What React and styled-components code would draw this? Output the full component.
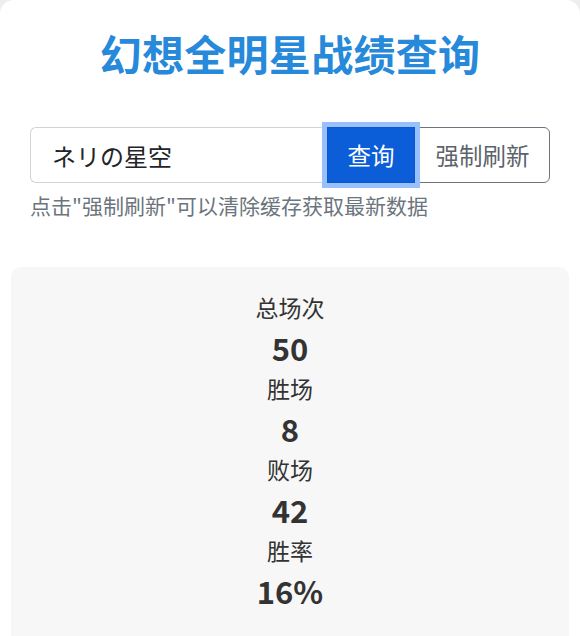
import React, { useState } from 'react';
import styled, { createGlobalStyle } from 'styled-components';

const GlobalStyle = createGlobalStyle`
    body {
        margin: 0;
        background: #eeeeee;
        font-family: "Noto Sans CJK SC", "Noto Sans", sans-serif;
    }
`;

const Card = styled.div`
    background: #ffffff;
    border-radius: 14px;
    padding: 12px 11px 40px;
    min-height: 700px;
    box-sizing: border-box;
`;

const Title = styled.h1`
    margin: 16px 0 0;
    text-align: center;
    color: #2689da;
    font-size: 42px;
    font-weight: 700;
    line-height: 50px;
    letter-spacing: 0.3px;
`;

const Form = styled.div`
    padding: 0 19px;
    margin-top: 49px;
`;

const InputGroup = styled.div`
    display: flex;
    height: 56px;
`;

const NameInput = styled.input`
    flex: 1;
    min-width: 0;
    border: 1px solid #ced4da;
    border-right: none;
    border-radius: 6px 0 0 6px;
    padding: 0 21px;
    font-family: inherit;
    font-size: 24px;
    color: #212529;
    outline: none;
`;

const Button = styled.button`
    font-family: inherit;
    font-size: 23.5px;
    cursor: pointer;
    padding: 0;
    position: relative;
    width: ${p => p.$width}px;
    ${p => p.$primary ? `
        background: #0b5ed7;
        border: 1px solid #0a58ca;
        color: #ffffff;
        box-shadow: 0 0 0 5px #98c0fb;
        z-index: 1;
    ` : `
        background: #ffffff;
        border: 1px solid #6c757d;
        border-radius: 0 6px 6px 0;
        color: #5c636a;
    `}
`;

const Hint = styled.div`
    margin-top: 7px;
    font-size: 21px;
    line-height: 30px;
    color: #6c757d;
`;

const StatsBox = styled.div`
    margin-top: 47px;
    background: #f7f7f7;
    border-radius: 10px;
    padding: 20px 0 60px;
    text-align: center;
    color: #333333;
`;

const StatLabel = styled.div`
    font-size: 23px;
    line-height: 40.5px;
`;

const StatValue = styled.div`
    font-size: 31px;
    font-weight: 700;
    line-height: 40.5px;
`;

const stats = [
    { label: '总场次', value: '50' },
    { label: '胜场', value: '8' },
    { label: '败场', value: '42' },
    { label: '胜率', value: '16%' },
];

const App = () => {
    const [name, setName] = useState('ネリの星空');

    return (
        <>
            <GlobalStyle/>
            <Card>
                <Title>幻想全明星战绩查询</Title>
                <Form>
                    <InputGroup>
                        <NameInput value={name} onChange={e => setName(e.target.value)}/>
                        <Button $primary $width={88}>查询</Button>
                        <Button $width={135}>强制刷新</Button>
                    </InputGroup>
                    <Hint>点击"强制刷新"可以清除缓存获取最新数据</Hint>
                </Form>
                <StatsBox>
                    {stats.map(s => (
                        <React.Fragment key={s.label}>
                            <StatLabel>{s.label}</StatLabel>
                            <StatValue>{s.value}</StatValue>
                        </React.Fragment>
                    ))}
                </StatsBox>
            </Card>
        </>
    );
}

export default App;
